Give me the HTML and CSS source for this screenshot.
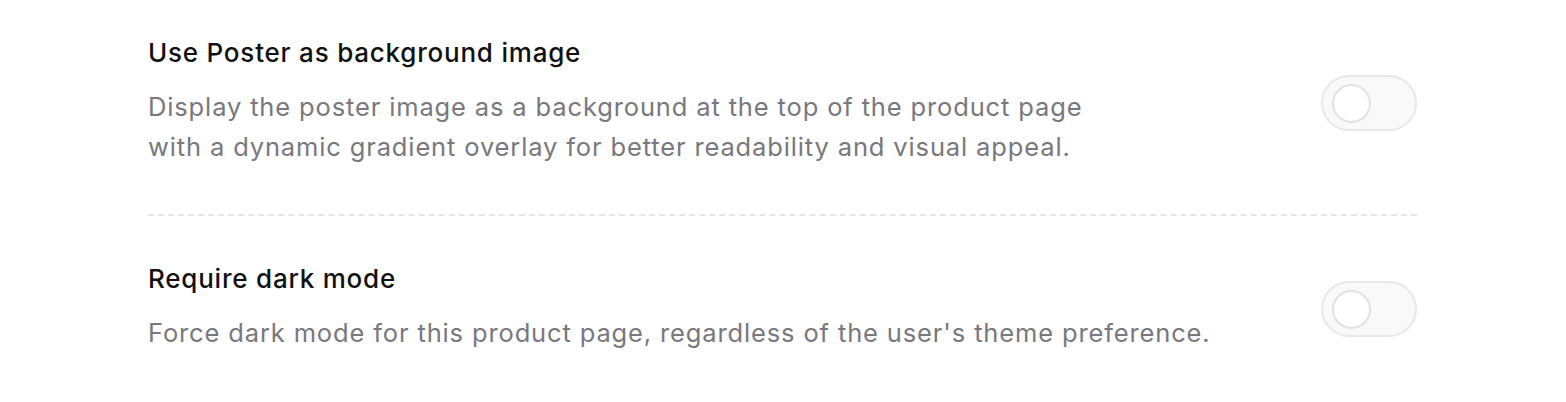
FILE: index.html
```html
<!DOCTYPE html>
<html>
<head>
<meta charset="utf-8">
<link rel="stylesheet" href="styles.css">
</head>
<body>
<div class="settings">
  <div class="row first">
    <div class="text">
      <div class="title">Use Poster as background image</div>
      <div class="desc">Display the poster image as a background at the top of the product page<br>with a dynamic gradient overlay for better readability and visual appeal.</div>
    </div>
    <div class="toggle"><div class="knob"></div></div>
  </div>
  <div class="row second">
    <div class="text">
      <div class="title">Require dark mode</div>
      <div class="desc">Force dark mode for this product page, regardless of the user's theme preference.</div>
    </div>
    <div class="toggle"><div class="knob"></div></div>
  </div>
</div>
</body>
</html>
```
FILE: styles.css
```css
html, body {
  margin: 0;
  padding: 0;
  background: #ffffff;
}
body {
  font-family: Inter, "Noto Sans", "Liberation Sans", sans-serif;
  -webkit-font-smoothing: antialiased;
}
.settings {
  width: 1269px;
  margin-left: 148px;
  padding-top: 37px;
}
.row {
  display: flex;
  align-items: center;
  justify-content: space-between;
}
.row.first {
  padding-bottom: 47px;
  border-bottom: 2px dashed #e6e6e8;
}
.row.second {
  padding-top: 47px;
}
.title {
  font-size: 26px;
  line-height: 32px;
  font-weight: 500;
  letter-spacing: 0.78px;
  color: #111113;
  margin-bottom: 18px;
}
.desc {
  font-size: 25.5px;
  line-height: 40px;
  letter-spacing: 0.86px;
  color: #78787e;
}
.toggle {
  height: 52px;
  width: 83px;
  border: 2px solid #e8e8e8;
  border-radius: 28px;
  background: #f9f9f9;
  display: flex;
  align-items: center;
  padding-left: 9px;
  box-sizing: content-box;
  margin-top: 2px;
}
.knob {
  width: 35px;
  height: 35px;
  border-radius: 50%;
  background: #ffffff;
  border: 2px solid #e2e2e2;
}
```
